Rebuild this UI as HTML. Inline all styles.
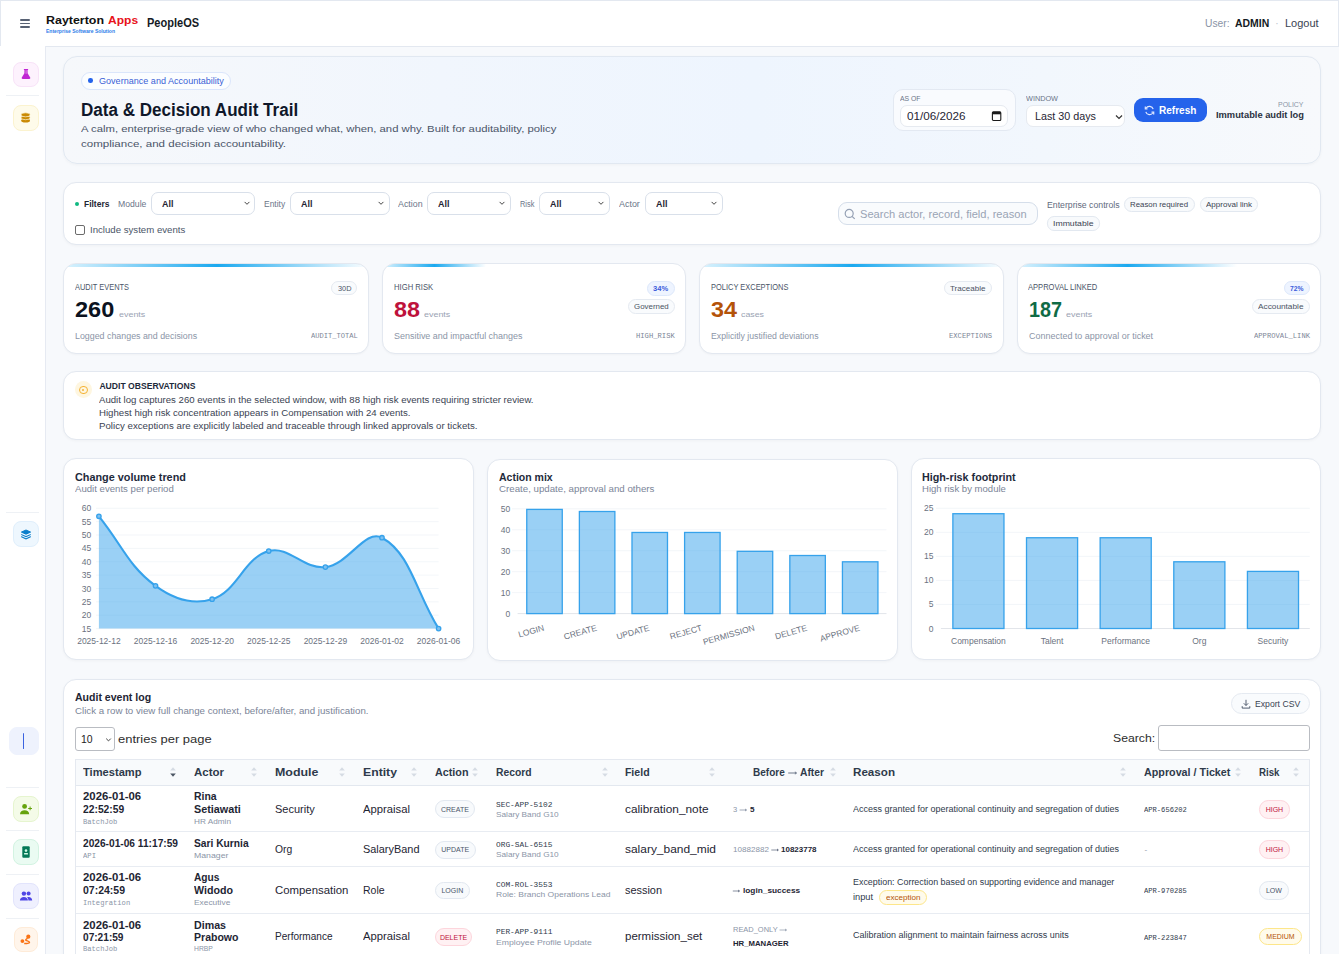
<!DOCTYPE html>
<html><head><meta charset="utf-8"><title>Data &amp; Decision Audit Trail</title>
<style>
html,body{margin:0;padding:0;}
body{width:1339px;height:954px;overflow:hidden;position:relative;background:#f8fafc;font-family:"Liberation Sans", sans-serif;}
.a{position:absolute;box-sizing:border-box;}
.t{white-space:pre;line-height:1;}

</style></head><body>
<div class="a" style="left:0.00px;top:0.00px;width:1339.00px;height:954.00px;background:#f7f9fc;"></div>
<div class="a" style="left:0.00px;top:0.00px;width:1339.00px;height:47.00px;background:#fff;border:1px solid #e3e8f0;"></div>
<div class="a" style="left:19.80px;top:19.10px;width:10.40px;height:1.60px;background:#586274;border-radius:1px;"></div>
<div class="a" style="left:19.80px;top:22.70px;width:10.40px;height:1.60px;background:#586274;border-radius:1px;"></div>
<div class="a" style="left:19.80px;top:26.20px;width:10.40px;height:1.60px;background:#586274;border-radius:1px;"></div>
<div class="a t" style="left:46.30px;top:14.02px;font-size:11.7px;font-weight:700;color:#111111;transform:scaleX(1.0632);transform-origin:0 0;">Rayterton</div>
<div class="a t" style="left:107.60px;top:14.02px;font-size:11.7px;font-weight:700;color:#e8131b;transform:scaleX(1.0302);transform-origin:0 0;">Apps</div>
<div class="a t" style="left:46.30px;top:30.02px;font-size:4.6px;font-weight:700;color:#2b7de9;transform:scaleX(1.0945);transform-origin:0 0;">Enterprise Software Solution</div>
<div class="a t" style="left:146.70px;top:18.02px;font-size:11.9px;font-weight:700;color:#161b26;transform:scaleX(0.9276);transform-origin:0 0;">PeopleOS</div>
<div class="a t" style="left:1205.00px;top:19.02px;font-size:10.0px;color:#8a94a6;transform:scaleX(1.0255);transform-origin:0 0;">User:</div>
<div class="a t" style="left:1235.00px;top:19.02px;font-size:10.0px;font-weight:700;color:#141a24;transform:scaleX(1.0435);transform-origin:0 0;">ADMIN</div>
<div class="a t" style="left:1275.33px;top:19.02px;font-size:10.0px;color:#b8c0cc;">·</div>
<div class="a t" style="left:1284.60px;top:19.02px;font-size:10.0px;color:#3a4352;transform:scaleX(1.0985);transform-origin:0 0;">Logout</div>
<div class="a" style="left:0.00px;top:46.00px;width:46.00px;height:908.00px;background:#fff;border-right:1px solid #e6eaf2;"></div>
<div class="a" style="left:13.10px;top:61.50px;width:25.70px;height:25.00px;background:#fdf2fd;border:1px solid #f8e3f8;border-radius:8px;"></div>
<div class="a" style="left:5.70px;top:95.00px;width:33.80px;height:1.00px;background:#eef1f5;"></div>
<div class="a" style="left:13.10px;top:105.00px;width:25.70px;height:25.70px;background:#fefbea;border:1px solid #fbf3cf;border-radius:8px;"></div>
<div class="a" style="left:5.70px;top:512.30px;width:33.80px;height:1.00px;background:#eef1f5;"></div>
<div class="a" style="left:13.10px;top:521.40px;width:25.70px;height:26.00px;background:#eef7fe;border:1px solid #e0effc;border-radius:8px;"></div>
<div class="a" style="left:8.80px;top:726.60px;width:30.70px;height:28.80px;background:#eef2fd;border:1px solid #eef2fd;border-radius:8px;"></div>
<div class="a" style="left:22.80px;top:733.00px;width:1.60px;height:16.00px;background:#3b63e0;border-radius:1px;"></div>
<div class="a" style="left:5.70px;top:786.70px;width:33.80px;height:1.00px;background:#eef1f5;"></div>
<div class="a" style="left:13.10px;top:795.80px;width:25.70px;height:26.20px;background:#f4fbe8;border:1px solid #e6f5cf;border-radius:8px;"></div>
<div class="a" style="left:5.70px;top:830.30px;width:33.80px;height:1.00px;background:#eef1f5;"></div>
<div class="a" style="left:13.10px;top:839.00px;width:25.70px;height:26.00px;background:#eafbf2;border:1px solid #d3f3e2;border-radius:8px;"></div>
<div class="a" style="left:5.70px;top:874.20px;width:33.80px;height:1.00px;background:#eef1f5;"></div>
<div class="a" style="left:13.10px;top:883.20px;width:25.70px;height:25.80px;background:#eff0fe;border:1px solid #e2e4fc;border-radius:8px;"></div>
<div class="a" style="left:5.70px;top:917.60px;width:33.80px;height:1.00px;background:#eef1f5;"></div>
<div class="a" style="left:14.00px;top:926.80px;width:23.80px;height:25.20px;background:#fff5eb;border:1px solid #feebd8;border-radius:8px;"></div>
<svg class="a" style="left:19px;top:67px;" width="13" height="14" viewBox="0 0 13 14"><path d="M4.9 2.1H9.1V3.1H8.6V6.3L11.2 10.6C11.6 11.3 11.1 11.9 10.3 11.9H3.7C2.9 11.9 2.4 11.3 2.8 10.6L5.4 6.3V3.1H4.9Z" fill="#c026d3"/><rect x="6.75" y="3.2" width="0.6" height="3.6" fill="#f6d6fb"/></svg>
<svg class="a" style="left:19px;top:111px;" width="13" height="14" viewBox="0 0 13 14"><ellipse cx="6.6" cy="9.6" rx="4.4" ry="2.0" fill="#ca8a04"/><ellipse cx="6.6" cy="6.7" rx="4.5" ry="2.0" fill="#ca8a04" stroke="#fdf6d8" stroke-width="0.7"/><ellipse cx="6.6" cy="3.8" rx="4.5" ry="2.0" fill="#ca8a04" stroke="#fdf6d8" stroke-width="0.7"/></svg>
<svg class="a" style="left:19px;top:527px;" width="14" height="14" viewBox="0 0 14 14"><path d="M7 3.0L11.6 5.1L7 7.2L2.4 5.1Z" fill="#0a7fcb" stroke="#0a7fcb" stroke-width="1" stroke-linejoin="round"/><path d="M2.2 6.9L7 9.1L11.8 6.9V8.1L7 10.3L2.2 8.1Z" fill="#0a7fcb"/><path d="M2.2 9.1L7 11.3L11.8 9.1V10.3L7 12.5L2.2 10.3Z" fill="#0a7fcb"/></svg>
<svg class="a" style="left:19px;top:802px;" width="14" height="14" viewBox="0 0 14 14"><circle cx="5.6" cy="4.4" r="2.4" fill="#65a30d"/><path d="M1 12.2c0-2.5 2-3.9 4.6-3.9s4.6 1.4 4.6 3.9z" fill="#65a30d"/><path d="M10.6 4.5h1v1.4H13v1h-1.4v1.4h-1V6.9H9.2v-1h1.4z" fill="#65a30d"/></svg>
<svg class="a" style="left:19px;top:845px;" width="14" height="14" viewBox="0 0 14 14"><rect x="3.3" y="1.3" width="7.4" height="11.4" rx="1" fill="#047857"/><circle cx="7" cy="5.6" r="1.3" fill="#d1fae5"/><rect x="5" y="8" width="4" height="1.6" rx=".6" fill="#d1fae5"/></svg>
<svg class="a" style="left:19px;top:889px;" width="14" height="14" viewBox="0 0 14 14"><circle cx="4.9" cy="4.6" r="2.2" fill="#4f46e5"/><circle cx="9.6" cy="4.6" r="2" fill="#4f46e5"/><path d="M0.9 11.6c0-2.2 1.7-3.6 4-3.6s4 1.4 4 3.6z" fill="#4f46e5"/><path d="M9.4 11.6c0-1.4-.5-2.6-1.4-3.3.5-.2 1-.3 1.6-.3 2.1 0 3.6 1.3 3.6 3.6z" fill="#4f46e5"/></svg>
<svg class="a" style="left:19px;top:932px;" width="14" height="14" viewBox="0 0 14 14"><circle cx="9.3" cy="4.7" r="2.1" fill="#f97316"/><circle cx="3.4" cy="9.1" r="1.9" fill="#f97316"/><path d="M8.6 6.2C7.4 6.9 6.3 7.3 6.7 8.1C7.1 8.9 10.5 8.9 10.5 10.2C10.5 11.4 8.8 11.5 5.2 11.5" fill="none" stroke="#f97316" stroke-width="1.4"/></svg>
<div class="a" style="left:63.00px;top:56.30px;width:1258.00px;height:107.90px;background:linear-gradient(90deg,#f6f8fb 0%,#f1f6fd 30%,#eef5fe 55%,#f2f7fd 78%,#f7f9fc 100%);border:1px solid #e1e8f1;border-radius:14px;box-shadow:0 1px 3px rgba(15,23,42,0.035);"></div>
<div class="a" style="left:80.70px;top:71.70px;width:150.80px;height:17.90px;background:#fbfdff;border:1px solid #dbe6fb;border-radius:9px;"></div>
<div class="a" style="left:88.40px;top:78.40px;width:4.60px;height:4.60px;background:#2563eb;border-radius:50%;"></div>
<div class="a t" style="left:98.60px;top:77.02px;font-size:8.5px;color:#3a5fd6;transform:scaleX(1.0658);transform-origin:0 0;">Governance and Accountability</div>
<div class="a t" style="left:81.20px;top:102.02px;font-size:17.5px;font-weight:700;color:#0f172a;transform:scaleX(0.9738);transform-origin:0 0;">Data &amp; Decision Audit Trail</div>
<div class="a t" style="left:81.00px;top:124.02px;font-size:9.8px;color:#4a5568;transform:scaleX(1.1542);transform-origin:0 0;">A calm, enterprise-grade view of who changed what, when, and why. Built for auditability, policy</div>
<div class="a t" style="left:81.00px;top:139.02px;font-size:9.8px;color:#4a5568;transform:scaleX(1.1776);transform-origin:0 0;">compliance, and decision accountability.</div>
<div class="a" style="left:892.90px;top:88.60px;width:123.30px;height:42.80px;background:#f9fbfe;border:1px solid #e3e9f2;border-radius:10px;"></div>
<div class="a t" style="left:900.20px;top:95.02px;font-size:7.0px;color:#6b7588;transform:scaleX(0.9760);transform-origin:0 0;">AS OF</div>
<div class="a" style="left:900.30px;top:105.30px;width:108.20px;height:21.30px;background:#fff;border:1px solid #e6eaf0;border-radius:7px;"></div>
<div class="a t" style="left:907.00px;top:111.02px;font-size:10.8px;color:#1f2533;transform:scaleX(1.0826);transform-origin:0 0;">01/06/2026</div>
<svg class="a" style="left:991px;top:110px;" width="11" height="12" viewBox="0 0 11 12"><rect x="1.4" y="1.9" width="8.4" height="8.6" rx="1" fill="none" stroke="#1a1a1a" stroke-width="1.1"/><rect x="1.4" y="1.9" width="8.4" height="2.4" fill="#1a1a1a"/></svg>
<div class="a t" style="left:1025.50px;top:95.02px;font-size:7.0px;color:#6b7588;transform:scaleX(1.0419);transform-origin:0 0;">WINDOW</div>
<div class="a" style="left:1026.00px;top:105.30px;width:98.70px;height:21.90px;background:#fff;border:1px solid #e6eaf0;border-radius:7px;"></div>
<div class="a t" style="left:1035.00px;top:111.02px;font-size:10.8px;color:#1f2533;transform:scaleX(0.9964);transform-origin:0 0;">Last 30 days</div>
<svg class="a" style="left:1114px;top:113px;" width="10" height="8" viewBox="0 0 10 8"><path d="M2 2.5l3 3 3-3" fill="none" stroke="#333" stroke-width="1.2"/></svg>
<div class="a" style="left:1133.70px;top:98.10px;width:73.50px;height:24.20px;background:#2563eb;border-radius:9px;"></div>
<svg class="a" style="left:1143px;top:104px;" width="13" height="13" viewBox="0 0 13 13"><path d="M10.2 5.2A4 4 0 0 0 3 4.2M2.8 7.8A4 4 0 0 0 10 8.8" fill="none" stroke="#dfe8ff" stroke-width="1.2"/><path d="M2.3 2.6v2.2h2.2M10.7 10.4V8.2H8.5" fill="none" stroke="#dfe8ff" stroke-width="1.2"/></svg>
<div class="a t" style="left:1159.00px;top:106.02px;font-size:10.0px;font-weight:700;color:#ffffff;transform:scaleX(1.0044);transform-origin:0 0;">Refresh</div>
<div class="a t" style="left:1278.30px;top:102.02px;font-size:6.8px;color:#8b95a6;transform:scaleX(1.0228);transform-origin:0 0;">POLICY</div>
<div class="a t" style="left:1215.80px;top:111.02px;font-size:9.0px;font-weight:700;color:#2a3140;transform:scaleX(1.0353);transform-origin:0 0;">Immutable audit log</div>
<div class="a" style="left:63.00px;top:182.00px;width:1258.00px;height:62.80px;background:#fff;border:1px solid #e3e8f0;border-radius:13px;box-shadow:0 1px 3px rgba(15,23,42,0.035);"></div>
<div class="a" style="left:75.10px;top:201.50px;width:4.40px;height:4.40px;background:#10b981;border-radius:50%;"></div>
<div class="a t" style="left:83.60px;top:199.02px;font-size:9.5px;font-weight:700;color:#1e2533;transform:scaleX(0.8909);transform-origin:0 0;">Filters</div>
<div class="a t" style="left:117.90px;top:200.02px;font-size:8.5px;color:#6b7588;transform:scaleX(1.0187);transform-origin:0 0;">Module</div>
<div class="a" style="left:151.40px;top:192.30px;width:104.10px;height:22.60px;background:#fff;border:1px solid #d9e0ea;border-radius:7px;"></div>
<div class="a t" style="left:162.40px;top:200.02px;font-size:9.2px;font-weight:700;color:#1f2533;transform:scaleX(0.9710);transform-origin:0 0;">All</div>
<svg class="a" style="left:241.5px;top:199px;" width="10.0" height="8" viewBox="0 0 10.0 8"><path d="M2.6 2.9l2.4 2.4 2.4-2.4" fill="none" stroke="#444" stroke-width="1"/></svg>
<div class="a t" style="left:264.40px;top:200.02px;font-size:8.5px;color:#6b7588;transform:scaleX(0.9926);transform-origin:0 0;">Entity</div>
<div class="a" style="left:290.30px;top:192.30px;width:99.30px;height:22.60px;background:#fff;border:1px solid #d9e0ea;border-radius:7px;"></div>
<div class="a t" style="left:301.30px;top:200.02px;font-size:9.2px;font-weight:700;color:#1f2533;transform:scaleX(0.9710);transform-origin:0 0;">All</div>
<svg class="a" style="left:375.6px;top:199px;" width="10.0" height="8" viewBox="0 0 10.0 8"><path d="M2.6 2.9l2.4 2.4 2.4-2.4" fill="none" stroke="#444" stroke-width="1"/></svg>
<div class="a t" style="left:398.40px;top:200.02px;font-size:8.5px;color:#6b7588;transform:scaleX(1.0413);transform-origin:0 0;">Action</div>
<div class="a" style="left:427.30px;top:192.30px;width:83.80px;height:22.60px;background:#fff;border:1px solid #d9e0ea;border-radius:7px;"></div>
<div class="a t" style="left:438.30px;top:200.02px;font-size:9.2px;font-weight:700;color:#1f2533;transform:scaleX(0.9710);transform-origin:0 0;">All</div>
<svg class="a" style="left:497.1px;top:199px;" width="10.0" height="8" viewBox="0 0 10.0 8"><path d="M2.6 2.9l2.4 2.4 2.4-2.4" fill="none" stroke="#444" stroke-width="1"/></svg>
<div class="a t" style="left:520.30px;top:200.02px;font-size:8.5px;color:#6b7588;transform:scaleX(0.8713);transform-origin:0 0;">Risk</div>
<div class="a" style="left:539.00px;top:192.30px;width:70.90px;height:22.60px;background:#fff;border:1px solid #d9e0ea;border-radius:7px;"></div>
<div class="a t" style="left:550.00px;top:200.02px;font-size:9.2px;font-weight:700;color:#1f2533;transform:scaleX(0.9710);transform-origin:0 0;">All</div>
<svg class="a" style="left:595.9px;top:199px;" width="10.0" height="8" viewBox="0 0 10.0 8"><path d="M2.6 2.9l2.4 2.4 2.4-2.4" fill="none" stroke="#444" stroke-width="1"/></svg>
<div class="a t" style="left:619.30px;top:200.02px;font-size:8.5px;color:#6b7588;transform:scaleX(1.0484);transform-origin:0 0;">Actor</div>
<div class="a" style="left:645.20px;top:192.30px;width:77.50px;height:22.60px;background:#fff;border:1px solid #d9e0ea;border-radius:7px;"></div>
<div class="a t" style="left:656.20px;top:200.02px;font-size:9.2px;font-weight:700;color:#1f2533;transform:scaleX(0.9710);transform-origin:0 0;">All</div>
<svg class="a" style="left:708.7px;top:199px;" width="10.0" height="8" viewBox="0 0 10.0 8"><path d="M2.6 2.9l2.4 2.4 2.4-2.4" fill="none" stroke="#444" stroke-width="1"/></svg>
<div class="a" style="left:74.50px;top:225.00px;width:10.10px;height:9.90px;background:#fff;border:1px solid #6b6b6b;border-radius:2px;"></div>
<div class="a t" style="left:89.70px;top:226.02px;font-size:9.0px;color:#4a5568;transform:scaleX(1.0703);transform-origin:0 0;">Include system events</div>
<div class="a" style="left:837.50px;top:201.60px;width:200.30px;height:23.90px;background:#f9fbfd;border:1px solid #d5deea;border-radius:9px;"></div>
<svg class="a" style="left:843px;top:207px;" width="14" height="14" viewBox="0 0 14 14"><circle cx="6.2" cy="6.4" r="4" fill="none" stroke="#94a0b4" stroke-width="1.2"/><path d="M9.1 9.3l2.6 2.6" stroke="#94a0b4" stroke-width="1.2"/></svg>
<div class="a t" style="left:860.40px;top:209.02px;font-size:11.0px;color:#9aa4b5;transform:scaleX(1.0092);transform-origin:0 0;">Search actor, record, field, reason</div>
<div class="a t" style="left:1046.90px;top:201.02px;font-size:8.5px;color:#5f6a7d;transform:scaleX(1.0245);transform-origin:0 0;">Enterprise controls</div>
<div class="a" style="left:1124.00px;top:196.90px;width:70.90px;height:14.80px;background:#f8fafc;border:1px solid #e2e8f0;border-radius:7.4px;"></div>
<div class="a t" style="left:1130.45px;top:201.02px;font-size:7.6px;color:#3a4352;transform:scaleX(1.0330);transform-origin:0 0;">Reason required</div>
<div class="a" style="left:1199.60px;top:196.90px;width:58.10px;height:14.80px;background:#f8fafc;border:1px solid #e2e8f0;border-radius:7.4px;"></div>
<div class="a t" style="left:1205.65px;top:201.02px;font-size:7.6px;color:#3a4352;transform:scaleX(1.0581);transform-origin:0 0;">Approval link</div>
<div class="a" style="left:1046.50px;top:216.40px;width:53.10px;height:14.30px;background:#f8fafc;border:1px solid #e2e8f0;border-radius:7.1px;"></div>
<div class="a t" style="left:1052.80px;top:220.02px;font-size:7.6px;color:#3a4352;transform:scaleX(1.1424);transform-origin:0 0;">Immutable</div>
<div class="a" style="left:63.1px;top:263.2px;width:305.80px;height:90.60px;background:#fff;border:1px solid #e3e8f0;border-radius:13px;overflow:hidden;box-shadow:0 1px 2px rgba(15,23,42,0.03);"><div style="position:absolute;left:0;top:0;width:305.8px;height:3.2px;background:linear-gradient(90deg,rgba(56,189,248,0.18),#1ba9ef 50%,rgba(56,189,248,0.0));"></div></div>
<div class="a t" style="left:75.00px;top:283.02px;font-size:8.4px;color:#4a5568;transform:scaleX(0.8891);transform-origin:0 0;">AUDIT EVENTS</div>
<div class="a t" style="left:75.20px;top:299.02px;font-size:22.2px;font-weight:700;color:#0b1220;transform:scaleX(1.0589);transform-origin:0 0;">260</div>
<div class="a t" style="left:118.90px;top:311.02px;font-size:7.8px;color:#9aa3b3;transform:scaleX(1.1449);transform-origin:0 0;">events</div>
<div class="a t" style="left:75.20px;top:332.02px;font-size:8.3px;color:#8b95a7;transform:scaleX(1.0673);transform-origin:0 0;">Logged changes and decisions</div>
<div class="a t" style="left:310.70px;top:333.02px;font-size:7.4px;font-family:'Liberation Mono', monospace;color:#7d8697;transform:scaleX(0.9593);transform-origin:0 0;">AUDIT_TOTAL</div>
<div class="a" style="left:331.40px;top:281.10px;width:26.00px;height:14.40px;background:#f9fbfd;border:1px solid #e5eaf1;border-radius:8px;"></div>
<div class="a t" style="left:337.65px;top:285.02px;font-size:7.6px;color:#4a5568;transform:scaleX(0.9691);transform-origin:0 0;">30D</div>
<div class="a" style="left:381.8px;top:263.2px;width:304.50px;height:90.60px;background:#fff;border:1px solid #e3e8f0;border-radius:13px;overflow:hidden;box-shadow:0 1px 2px rgba(15,23,42,0.03);"><div style="position:absolute;left:0;top:0;width:103.5px;height:3.2px;background:linear-gradient(90deg,rgba(56,189,248,0.18),#1ba9ef 50%,rgba(56,189,248,0.0));"></div></div>
<div class="a t" style="left:393.70px;top:283.02px;font-size:8.4px;color:#4a5568;transform:scaleX(0.9156);transform-origin:0 0;">HIGH RISK</div>
<div class="a t" style="left:393.90px;top:299.02px;font-size:22.2px;font-weight:700;color:#be123c;transform:scaleX(1.0535);transform-origin:0 0;">88</div>
<div class="a t" style="left:424.40px;top:311.02px;font-size:7.8px;color:#9aa3b3;transform:scaleX(1.1449);transform-origin:0 0;">events</div>
<div class="a t" style="left:393.90px;top:332.02px;font-size:8.3px;color:#8b95a7;transform:scaleX(1.0799);transform-origin:0 0;">Sensitive and impactful changes</div>
<div class="a t" style="left:636.10px;top:333.02px;font-size:7.4px;font-family:'Liberation Mono', monospace;color:#7d8697;transform:scaleX(0.9720);transform-origin:0 0;">HIGH_RISK</div>
<div class="a" style="left:647.20px;top:280.50px;width:27.60px;height:15.10px;background:#eef4ff;border:1px solid #dde8fb;border-radius:8px;"></div>
<div class="a t" style="left:653.45px;top:285.02px;font-size:7.6px;font-weight:700;color:#3b5bdb;transform:scaleX(0.9935);transform-origin:0 0;">34%</div>
<div class="a" style="left:627.60px;top:298.50px;width:47.20px;height:15.10px;background:#f9fbfd;border:1px solid #e5eaf1;border-radius:8px;"></div>
<div class="a t" style="left:633.85px;top:303.02px;font-size:7.6px;color:#4a5363;transform:scaleX(1.0405);transform-origin:0 0;">Governed</div>
<div class="a" style="left:698.6px;top:263.2px;width:305.00px;height:90.60px;background:#fff;border:1px solid #e3e8f0;border-radius:13px;overflow:hidden;box-shadow:0 1px 2px rgba(15,23,42,0.03);"><div style="position:absolute;left:0;top:0;width:305.0px;height:3.2px;background:linear-gradient(90deg,rgba(56,189,248,0.18),#1ba9ef 50%,rgba(56,189,248,0.0));"></div></div>
<div class="a t" style="left:710.50px;top:283.02px;font-size:8.4px;color:#4a5568;transform:scaleX(0.8905);transform-origin:0 0;">POLICY EXCEPTIONS</div>
<div class="a t" style="left:710.70px;top:299.02px;font-size:22.2px;font-weight:700;color:#b45309;transform:scaleX(1.0535);transform-origin:0 0;">34</div>
<div class="a t" style="left:741.20px;top:311.02px;font-size:7.8px;color:#9aa3b3;transform:scaleX(1.1292);transform-origin:0 0;">cases</div>
<div class="a t" style="left:710.70px;top:332.02px;font-size:8.3px;color:#8b95a7;transform:scaleX(1.0501);transform-origin:0 0;">Explicitly justified deviations</div>
<div class="a t" style="left:949.20px;top:333.02px;font-size:7.4px;font-family:'Liberation Mono', monospace;color:#7d8697;transform:scaleX(0.9695);transform-origin:0 0;">EXCEPTIONS</div>
<div class="a" style="left:944.10px;top:281.10px;width:48.00px;height:14.40px;background:#f9fbfd;border:1px solid #e5eaf1;border-radius:8px;"></div>
<div class="a t" style="left:950.35px;top:285.02px;font-size:7.6px;color:#4a5363;transform:scaleX(1.0602);transform-origin:0 0;">Traceable</div>
<div class="a" style="left:1016.5px;top:263.2px;width:304.50px;height:90.60px;background:#fff;border:1px solid #e3e8f0;border-radius:13px;overflow:hidden;box-shadow:0 1px 2px rgba(15,23,42,0.03);"><div style="position:absolute;left:0;top:0;width:219.2px;height:3.2px;background:linear-gradient(90deg,rgba(56,189,248,0.18),#1ba9ef 50%,rgba(56,189,248,0.0));"></div></div>
<div class="a t" style="left:1028.40px;top:283.02px;font-size:8.4px;color:#4a5568;transform:scaleX(0.9026);transform-origin:0 0;">APPROVAL LINKED</div>
<div class="a t" style="left:1028.60px;top:299.02px;font-size:22.2px;font-weight:700;color:#0f6b45;transform:scaleX(0.8914);transform-origin:0 0;">187</div>
<div class="a t" style="left:1066.10px;top:311.02px;font-size:7.8px;color:#9aa3b3;transform:scaleX(1.1449);transform-origin:0 0;">events</div>
<div class="a t" style="left:1028.60px;top:332.02px;font-size:8.3px;color:#8b95a7;transform:scaleX(1.0806);transform-origin:0 0;">Connected to approval or ticket</div>
<div class="a t" style="left:1253.60px;top:333.02px;font-size:7.4px;font-family:'Liberation Mono', monospace;color:#7d8697;transform:scaleX(0.9713);transform-origin:0 0;">APPROVAL_LINK</div>
<div class="a" style="left:1283.50px;top:281.10px;width:26.00px;height:14.40px;background:#eef4ff;border:1px solid #dde8fb;border-radius:8px;"></div>
<div class="a t" style="left:1289.75px;top:285.02px;font-size:7.6px;font-weight:700;color:#3b5bdb;transform:scaleX(0.8882);transform-origin:0 0;">72%</div>
<div class="a" style="left:1251.50px;top:298.50px;width:58.00px;height:15.10px;background:#f9fbfd;border:1px solid #e5eaf1;border-radius:8px;"></div>
<div class="a t" style="left:1257.75px;top:303.02px;font-size:7.6px;color:#4a5363;transform:scaleX(1.0886);transform-origin:0 0;">Accountable</div>
<div class="a" style="left:63.10px;top:371.20px;width:1257.90px;height:68.60px;background:#fff;border:1px solid #e3e8f0;border-radius:13px;box-shadow:0 1px 3px rgba(15,23,42,0.035);"></div>
<div class="a" style="left:74.60px;top:381.30px;width:17.40px;height:16.90px;background:#fef6e0;border-radius:50%;"></div>
<div class="a" style="left:78.90px;top:385.60px;width:8.80px;height:8.80px;border:1.2px solid #f5b335;border-radius:50%;"></div>
<div class="a" style="left:82.20px;top:388.90px;width:2.20px;height:2.20px;background:#f5b335;border-radius:50%;"></div>
<div class="a t" style="left:99.40px;top:382.02px;font-size:8.6px;font-weight:700;color:#1e2a3b;">AUDIT OBSERVATIONS</div>
<div class="a t" style="left:99.40px;top:396.02px;font-size:8.9px;color:#3a4352;transform:scaleX(1.0820);transform-origin:0 0;">Audit log captures 260 events in the selected window, with 88 high risk events requiring stricter review.</div>
<div class="a t" style="left:99.40px;top:409.02px;font-size:8.9px;color:#3a4352;transform:scaleX(1.0868);transform-origin:0 0;">Highest high risk concentration appears in Compensation with 24 events.</div>
<div class="a t" style="left:99.40px;top:422.02px;font-size:8.9px;color:#3a4352;transform:scaleX(1.0914);transform-origin:0 0;">Policy exceptions are explicitly labeled and traceable through linked approvals or tickets.</div>
<div class="a" style="left:63.10px;top:458.20px;width:411.30px;height:202.30px;background:#fff;border:1px solid #e3e8f0;border-radius:13px;box-shadow:0 1px 3px rgba(15,23,42,0.035);"></div>
<div class="a t" style="left:74.90px;top:473.02px;font-size:10.2px;font-weight:700;color:#1e2a3b;transform:scaleX(1.0648);transform-origin:0 0;">Change volume trend</div>
<div class="a t" style="left:74.90px;top:485.02px;font-size:8.4px;color:#7b8598;transform:scaleX(1.1471);transform-origin:0 0;">Audit events per period</div>
<div class="a" style="left:487.00px;top:458.70px;width:410.80px;height:202.30px;background:#fff;border:1px solid #e3e8f0;border-radius:13px;box-shadow:0 1px 3px rgba(15,23,42,0.035);"></div>
<div class="a t" style="left:498.60px;top:473.02px;font-size:10.2px;font-weight:700;color:#1e2a3b;transform:scaleX(1.0312);transform-origin:0 0;">Action mix</div>
<div class="a t" style="left:498.60px;top:485.02px;font-size:8.4px;color:#7b8598;transform:scaleX(1.1589);transform-origin:0 0;">Create, update, approval and others</div>
<div class="a" style="left:910.80px;top:458.20px;width:410.50px;height:202.30px;background:#fff;border:1px solid #e3e8f0;border-radius:13px;box-shadow:0 1px 3px rgba(15,23,42,0.035);"></div>
<div class="a t" style="left:922.00px;top:473.02px;font-size:10.2px;font-weight:700;color:#1e2a3b;transform:scaleX(1.0546);transform-origin:0 0;">High-risk footprint</div>
<div class="a t" style="left:922.00px;top:485.02px;font-size:8.4px;color:#7b8598;transform:scaleX(1.1408);transform-origin:0 0;">High risk by module</div>
<svg class="a" style="left:0;top:0;" width="1339" height="954" viewBox="0 0 1339 954" font-family="'Liberation Sans', sans-serif"><line x1="96" y1="508.30" x2="438.6" y2="508.30" stroke="#eef2f7" stroke-width="0.7"/><text x="91.3" y="511.30" text-anchor="end" font-size="8.5" fill="#6b7280">60</text><line x1="96" y1="521.67" x2="438.6" y2="521.67" stroke="#eef2f7" stroke-width="0.7"/><text x="91.3" y="524.67" text-anchor="end" font-size="8.5" fill="#6b7280">55</text><line x1="96" y1="535.03" x2="438.6" y2="535.03" stroke="#eef2f7" stroke-width="0.7"/><text x="91.3" y="538.03" text-anchor="end" font-size="8.5" fill="#6b7280">50</text><line x1="96" y1="548.40" x2="438.6" y2="548.40" stroke="#eef2f7" stroke-width="0.7"/><text x="91.3" y="551.40" text-anchor="end" font-size="8.5" fill="#6b7280">45</text><line x1="96" y1="561.77" x2="438.6" y2="561.77" stroke="#eef2f7" stroke-width="0.7"/><text x="91.3" y="564.77" text-anchor="end" font-size="8.5" fill="#6b7280">40</text><line x1="96" y1="575.13" x2="438.6" y2="575.13" stroke="#eef2f7" stroke-width="0.7"/><text x="91.3" y="578.13" text-anchor="end" font-size="8.5" fill="#6b7280">35</text><line x1="96" y1="588.50" x2="438.6" y2="588.50" stroke="#eef2f7" stroke-width="0.7"/><text x="91.3" y="591.50" text-anchor="end" font-size="8.5" fill="#6b7280">30</text><line x1="96" y1="601.87" x2="438.6" y2="601.87" stroke="#eef2f7" stroke-width="0.7"/><text x="91.3" y="604.87" text-anchor="end" font-size="8.5" fill="#6b7280">25</text><line x1="96" y1="615.23" x2="438.6" y2="615.23" stroke="#eef2f7" stroke-width="0.7"/><text x="91.3" y="618.23" text-anchor="end" font-size="8.5" fill="#6b7280">20</text><line x1="96" y1="628.60" x2="438.6" y2="628.60" stroke="#eef2f7" stroke-width="0.7"/><text x="91.3" y="631.60" text-anchor="end" font-size="8.5" fill="#6b7280">15</text><path d="M98.90,516.32 C121.55,544.12 128.05,565.72 155.52,585.83 C173.34,598.87 192.24,605.30 212.13,599.19 C237.54,591.40 243.47,558.23 268.75,551.07 C288.77,545.40 303.63,569.68 325.37,567.11 C348.93,564.33 365.07,528.52 381.98,537.71 C410.37,553.12 415.95,592.24 438.60,628.60 L438.60,628.60 L98.90,628.60 Z" fill="rgba(54,162,235,0.5)"/><path d="M98.90,516.32 C121.55,544.12 128.05,565.72 155.52,585.83 C173.34,598.87 192.24,605.30 212.13,599.19 C237.54,591.40 243.47,558.23 268.75,551.07 C288.77,545.40 303.63,569.68 325.37,567.11 C348.93,564.33 365.07,528.52 381.98,537.71 C410.37,553.12 415.95,592.24 438.60,628.60" fill="none" stroke="#36a2eb" stroke-width="2.1"/><circle cx="98.90" cy="516.32" r="2.2" fill="#7ec0f0" stroke="#36a2eb" stroke-width="1.3"/><circle cx="155.52" cy="585.83" r="2.2" fill="#7ec0f0" stroke="#36a2eb" stroke-width="1.3"/><circle cx="212.13" cy="599.19" r="2.2" fill="#7ec0f0" stroke="#36a2eb" stroke-width="1.3"/><circle cx="268.75" cy="551.07" r="2.2" fill="#7ec0f0" stroke="#36a2eb" stroke-width="1.3"/><circle cx="325.37" cy="567.11" r="2.2" fill="#7ec0f0" stroke="#36a2eb" stroke-width="1.3"/><circle cx="381.98" cy="537.71" r="2.2" fill="#7ec0f0" stroke="#36a2eb" stroke-width="1.3"/><circle cx="438.60" cy="628.60" r="2.2" fill="#7ec0f0" stroke="#36a2eb" stroke-width="1.3"/><text x="98.90" y="644.3" text-anchor="middle" font-size="8.5" fill="#6b7280">2025-12-12</text><text x="155.52" y="644.3" text-anchor="middle" font-size="8.5" fill="#6b7280">2025-12-16</text><text x="212.13" y="644.3" text-anchor="middle" font-size="8.5" fill="#6b7280">2025-12-20</text><text x="268.75" y="644.3" text-anchor="middle" font-size="8.5" fill="#6b7280">2025-12-25</text><text x="325.37" y="644.3" text-anchor="middle" font-size="8.5" fill="#6b7280">2025-12-29</text><text x="381.98" y="644.3" text-anchor="middle" font-size="8.5" fill="#6b7280">2026-01-02</text><text x="438.60" y="644.3" text-anchor="middle" font-size="8.5" fill="#6b7280">2026-01-06</text><line x1="517.6" y1="613.60" x2="886.5" y2="613.60" stroke="#e2e5ea" stroke-width="1"/><text x="510.3" y="616.60" text-anchor="end" font-size="8.5" fill="#6b7280">0</text><line x1="512" y1="592.64" x2="886.5" y2="592.64" stroke="#eef2f7" stroke-width="0.7"/><text x="510.3" y="595.64" text-anchor="end" font-size="8.5" fill="#6b7280">10</text><line x1="512" y1="571.68" x2="886.5" y2="571.68" stroke="#eef2f7" stroke-width="0.7"/><text x="510.3" y="574.68" text-anchor="end" font-size="8.5" fill="#6b7280">20</text><line x1="512" y1="550.72" x2="886.5" y2="550.72" stroke="#eef2f7" stroke-width="0.7"/><text x="510.3" y="553.72" text-anchor="end" font-size="8.5" fill="#6b7280">30</text><line x1="512" y1="529.76" x2="886.5" y2="529.76" stroke="#eef2f7" stroke-width="0.7"/><text x="510.3" y="532.76" text-anchor="end" font-size="8.5" fill="#6b7280">40</text><line x1="512" y1="508.80" x2="886.5" y2="508.80" stroke="#eef2f7" stroke-width="0.7"/><text x="510.3" y="511.80" text-anchor="end" font-size="8.5" fill="#6b7280">50</text><rect x="526.76" y="509.40" width="35.50" height="104.20" fill="rgba(54,162,235,0.5)" stroke="#36a2eb" stroke-width="1.3"/><text x="543.51" y="630.50" text-anchor="end" font-size="8.5" fill="#6b7280" transform="rotate(-16 543.51 626)">LOGIN</text><rect x="579.37" y="511.50" width="35.50" height="102.10" fill="rgba(54,162,235,0.5)" stroke="#36a2eb" stroke-width="1.3"/><text x="596.12" y="630.50" text-anchor="end" font-size="8.5" fill="#6b7280" transform="rotate(-16 596.12 626)">CREATE</text><rect x="631.99" y="532.46" width="35.50" height="81.14" fill="rgba(54,162,235,0.5)" stroke="#36a2eb" stroke-width="1.3"/><text x="648.74" y="630.50" text-anchor="end" font-size="8.5" fill="#6b7280" transform="rotate(-16 648.74 626)">UPDATE</text><rect x="684.60" y="532.46" width="35.50" height="81.14" fill="rgba(54,162,235,0.5)" stroke="#36a2eb" stroke-width="1.3"/><text x="701.35" y="630.50" text-anchor="end" font-size="8.5" fill="#6b7280" transform="rotate(-16 701.35 626)">REJECT</text><rect x="737.21" y="551.32" width="35.50" height="62.28" fill="rgba(54,162,235,0.5)" stroke="#36a2eb" stroke-width="1.3"/><text x="753.96" y="630.50" text-anchor="end" font-size="8.5" fill="#6b7280" transform="rotate(-16 753.96 626)">PERMISSION</text><rect x="789.83" y="555.51" width="35.50" height="58.09" fill="rgba(54,162,235,0.5)" stroke="#36a2eb" stroke-width="1.3"/><text x="806.58" y="630.50" text-anchor="end" font-size="8.5" fill="#6b7280" transform="rotate(-16 806.58 626)">DELETE</text><rect x="842.44" y="561.80" width="35.50" height="51.80" fill="rgba(54,162,235,0.5)" stroke="#36a2eb" stroke-width="1.3"/><text x="859.19" y="630.50" text-anchor="end" font-size="8.5" fill="#6b7280" transform="rotate(-16 859.19 626)">APPROVE</text><line x1="940.9" y1="628.50" x2="1309.8" y2="628.50" stroke="#e2e5ea" stroke-width="1"/><text x="933.5" y="631.50" text-anchor="end" font-size="8.5" fill="#6b7280">0</text><line x1="936" y1="604.46" x2="1309.8" y2="604.46" stroke="#eef2f7" stroke-width="0.7"/><text x="933.5" y="607.46" text-anchor="end" font-size="8.5" fill="#6b7280">5</text><line x1="936" y1="580.42" x2="1309.8" y2="580.42" stroke="#eef2f7" stroke-width="0.7"/><text x="933.5" y="583.42" text-anchor="end" font-size="8.5" fill="#6b7280">10</text><line x1="936" y1="556.38" x2="1309.8" y2="556.38" stroke="#eef2f7" stroke-width="0.7"/><text x="933.5" y="559.38" text-anchor="end" font-size="8.5" fill="#6b7280">15</text><line x1="936" y1="532.34" x2="1309.8" y2="532.34" stroke="#eef2f7" stroke-width="0.7"/><text x="933.5" y="535.34" text-anchor="end" font-size="8.5" fill="#6b7280">20</text><line x1="936" y1="508.30" x2="1309.8" y2="508.30" stroke="#eef2f7" stroke-width="0.7"/><text x="933.5" y="511.30" text-anchor="end" font-size="8.5" fill="#6b7280">25</text><rect x="952.87" y="513.71" width="51.10" height="114.79" fill="rgba(54,162,235,0.5)" stroke="#36a2eb" stroke-width="1.3"/><text x="978.42" y="644.3" text-anchor="middle" font-size="8.5" fill="#6b7280">Compensation</text><rect x="1026.51" y="537.75" width="51.10" height="90.75" fill="rgba(54,162,235,0.5)" stroke="#36a2eb" stroke-width="1.3"/><text x="1052.06" y="644.3" text-anchor="middle" font-size="8.5" fill="#6b7280">Talent</text><rect x="1100.15" y="537.75" width="51.10" height="90.75" fill="rgba(54,162,235,0.5)" stroke="#36a2eb" stroke-width="1.3"/><text x="1125.70" y="644.3" text-anchor="middle" font-size="8.5" fill="#6b7280">Performance</text><rect x="1173.79" y="561.79" width="51.10" height="66.71" fill="rgba(54,162,235,0.5)" stroke="#36a2eb" stroke-width="1.3"/><text x="1199.34" y="644.3" text-anchor="middle" font-size="8.5" fill="#6b7280">Org</text><rect x="1247.43" y="571.40" width="51.10" height="57.10" fill="rgba(54,162,235,0.5)" stroke="#36a2eb" stroke-width="1.3"/><text x="1272.98" y="644.3" text-anchor="middle" font-size="8.5" fill="#6b7280">Security</text></svg>
<div class="a" style="left:63.40px;top:679.40px;width:1257.60px;height:320.60px;background:#fff;border:1px solid #e3e8f0;border-radius:13px;box-shadow:0 1px 3px rgba(15,23,42,0.035);"></div>
<div class="a t" style="left:75.20px;top:693.02px;font-size:10.0px;font-weight:700;color:#1e2533;transform:scaleX(1.0537);transform-origin:0 0;">Audit event log</div>
<div class="a t" style="left:75.20px;top:707.02px;font-size:8.6px;color:#7b8598;transform:scaleX(1.1295);transform-origin:0 0;">Click a row to view full change context, before/after, and justification.</div>
<div class="a" style="left:1231.40px;top:692.70px;width:78.50px;height:21.80px;background:#f9fbfd;border:1px solid #e5eaf1;border-radius:11px;"></div>
<svg class="a" style="left:1240px;top:698px;" width="12" height="12" viewBox="0 0 12 12"><path d="M6 1.8v5.6M3.8 5.3L6 7.5l2.2-2.2M2.2 8.2v1.9h7.6V8.2" fill="none" stroke="#4a5568" stroke-width="0.95"/></svg>
<div class="a t" style="left:1255.40px;top:700.02px;font-size:9.0px;color:#3a4352;transform:scaleX(0.9614);transform-origin:0 0;">Export CSV</div>
<div class="a" style="left:74.70px;top:726.50px;width:39.90px;height:24.20px;background:#fff;border:1px solid #b9bcc2;border-radius:3px;"></div>
<div class="a t" style="left:81.40px;top:734.02px;font-size:10.8px;color:#222;transform:scaleX(0.9659);transform-origin:0 0;">10</div>
<svg class="a" style="left:104px;top:736px;" width="9" height="8" viewBox="0 0 9 8"><path d="M2.2 2.6l2.3 2.3 2.3-2.3" fill="none" stroke="#444" stroke-width="1"/></svg>
<div class="a t" style="left:118.00px;top:734.02px;font-size:11.4px;color:#2d2d2d;transform:scaleX(1.1382);transform-origin:0 0;">entries per page</div>
<div class="a t" style="left:1112.90px;top:733.02px;font-size:11.4px;color:#2d2d2d;transform:scaleX(1.0725);transform-origin:0 0;">Search:</div>
<div class="a" style="left:1157.50px;top:725.40px;width:152.00px;height:25.40px;background:#fff;border:1px solid #b9bcc2;border-radius:3px;"></div>
<div class="a" style="left:74.80px;top:758.50px;width:1234.80px;height:241.50px;background:#fff;border:1px solid #e5e9f0;border-top-left-radius:3px;border-top-right-radius:3px;"></div>
<div class="a" style="left:74.80px;top:758.50px;width:1234.80px;height:27.70px;background:#f8fafc;border:1px solid #e5e9f0;border-bottom:1px solid #e3e8ef;"></div>
<div class="a t" style="left:82.80px;top:767.02px;font-size:10.6px;font-weight:700;color:#2f3a4b;transform:scaleX(1.0496);transform-origin:0 0;">Timestamp</div>
<svg class="a" style="left:168.8px;top:765px;" width="8.0" height="14" viewBox="0 0 8.0 14"><path d="M1.2 5.6L4 2.2l2.8 3.4z" fill="#d5dbe3"/><path d="M1.2 8.4L4 11.8l2.8-3.4z" fill="#4b5563"/></svg>
<div class="a t" style="left:193.60px;top:767.02px;font-size:10.6px;font-weight:700;color:#2f3a4b;transform:scaleX(1.0845);transform-origin:0 0;">Actor</div>
<svg class="a" style="left:249.7px;top:765px;" width="8.0" height="14" viewBox="0 0 8.0 14"><path d="M1.2 5.6L4 2.2l2.8 3.4z" fill="#d5dbe3"/><path d="M1.2 8.4L4 11.8l2.8-3.4z" fill="#d5dbe3"/></svg>
<div class="a t" style="left:274.60px;top:767.02px;font-size:10.6px;font-weight:700;color:#2f3a4b;transform:scaleX(1.1707);transform-origin:0 0;">Module</div>
<svg class="a" style="left:338.3px;top:765px;" width="8.0" height="14" viewBox="0 0 8.0 14"><path d="M1.2 5.6L4 2.2l2.8 3.4z" fill="#d5dbe3"/><path d="M1.2 8.4L4 11.8l2.8-3.4z" fill="#d5dbe3"/></svg>
<div class="a t" style="left:362.90px;top:767.02px;font-size:10.6px;font-weight:700;color:#2f3a4b;transform:scaleX(1.1554);transform-origin:0 0;">Entity</div>
<svg class="a" style="left:409.6px;top:765px;" width="8.0" height="14" viewBox="0 0 8.0 14"><path d="M1.2 5.6L4 2.2l2.8 3.4z" fill="#d5dbe3"/><path d="M1.2 8.4L4 11.8l2.8-3.4z" fill="#d5dbe3"/></svg>
<div class="a t" style="left:434.50px;top:767.02px;font-size:10.6px;font-weight:700;color:#2f3a4b;transform:scaleX(1.0165);transform-origin:0 0;">Action</div>
<svg class="a" style="left:471.3px;top:765px;" width="8.0" height="14" viewBox="0 0 8.0 14"><path d="M1.2 5.6L4 2.2l2.8 3.4z" fill="#d5dbe3"/><path d="M1.2 8.4L4 11.8l2.8-3.4z" fill="#d5dbe3"/></svg>
<div class="a t" style="left:495.70px;top:767.02px;font-size:10.6px;font-weight:700;color:#2f3a4b;transform:scaleX(0.9754);transform-origin:0 0;">Record</div>
<svg class="a" style="left:600.5px;top:765px;" width="8.0" height="14" viewBox="0 0 8.0 14"><path d="M1.2 5.6L4 2.2l2.8 3.4z" fill="#d5dbe3"/><path d="M1.2 8.4L4 11.8l2.8-3.4z" fill="#d5dbe3"/></svg>
<div class="a t" style="left:624.90px;top:767.02px;font-size:10.6px;font-weight:700;color:#2f3a4b;">Field</div>
<svg class="a" style="left:708.1px;top:765px;" width="8.0" height="14" viewBox="0 0 8.0 14"><path d="M1.2 5.6L4 2.2l2.8 3.4z" fill="#d5dbe3"/><path d="M1.2 8.4L4 11.8l2.8-3.4z" fill="#d5dbe3"/></svg>
<div class="a t" style="left:753.20px;top:767.02px;font-size:10.6px;font-weight:700;color:#2f3a4b;transform:scaleX(0.9477);transform-origin:0 0;">Before</div>
<div class="a t" style="left:800.30px;top:767.02px;font-size:10.6px;font-weight:700;color:#2f3a4b;transform:scaleX(0.9709);transform-origin:0 0;">After</div>
<svg class="a" style="left:828.9px;top:765px;" width="8.0" height="14" viewBox="0 0 8.0 14"><path d="M1.2 5.6L4 2.2l2.8 3.4z" fill="#d5dbe3"/><path d="M1.2 8.4L4 11.8l2.8-3.4z" fill="#d5dbe3"/></svg>
<div class="a t" style="left:853.40px;top:767.02px;font-size:10.6px;font-weight:700;color:#2f3a4b;transform:scaleX(1.0975);transform-origin:0 0;">Reason</div>
<svg class="a" style="left:1119.3px;top:765px;" width="8.0" height="14" viewBox="0 0 8.0 14"><path d="M1.2 5.6L4 2.2l2.8 3.4z" fill="#d5dbe3"/><path d="M1.2 8.4L4 11.8l2.8-3.4z" fill="#d5dbe3"/></svg>
<div class="a t" style="left:1143.80px;top:767.02px;font-size:10.6px;font-weight:700;color:#2f3a4b;transform:scaleX(1.0145);transform-origin:0 0;">Approval / Ticket</div>
<svg class="a" style="left:1234.0px;top:765px;" width="8.0" height="14" viewBox="0 0 8.0 14"><path d="M1.2 5.6L4 2.2l2.8 3.4z" fill="#d5dbe3"/><path d="M1.2 8.4L4 11.8l2.8-3.4z" fill="#d5dbe3"/></svg>
<div class="a t" style="left:1258.60px;top:767.02px;font-size:10.6px;font-weight:700;color:#2f3a4b;transform:scaleX(0.9161);transform-origin:0 0;">Risk</div>
<svg class="a" style="left:1291.5px;top:765px;" width="8.0" height="14" viewBox="0 0 8.0 14"><path d="M1.2 5.6L4 2.2l2.8 3.4z" fill="#d5dbe3"/><path d="M1.2 8.4L4 11.8l2.8-3.4z" fill="#d5dbe3"/></svg>
<div class="a" style="left:75.80px;top:830.80px;width:1232.80px;height:1.00px;background:#e8ecf2;"></div>
<div class="a" style="left:75.80px;top:865.90px;width:1232.80px;height:1.00px;background:#e8ecf2;"></div>
<div class="a" style="left:75.80px;top:912.60px;width:1232.80px;height:1.00px;background:#e8ecf2;"></div>
<div class="a t" style="left:82.80px;top:792.02px;font-size:10.0px;font-weight:700;color:#1e2533;transform:scaleX(1.1378);transform-origin:0 0;">2026-01-06</div>
<div class="a t" style="left:82.80px;top:805.02px;font-size:10.0px;font-weight:700;color:#1e2533;transform:scaleX(1.0292);transform-origin:0 0;">22:52:59</div>
<div class="a t" style="left:82.80px;top:819.02px;font-size:7.1px;font-family:'Liberation Mono', monospace;color:#8b95a7;transform:scaleX(1.0072);transform-origin:0 0;">BatchJob</div>
<div class="a t" style="left:193.70px;top:792.02px;font-size:10.0px;font-weight:700;color:#1e2533;transform:scaleX(1.0429);transform-origin:0 0;">Rina</div>
<div class="a t" style="left:193.70px;top:805.02px;font-size:10.0px;font-weight:700;color:#1e2533;transform:scaleX(1.0796);transform-origin:0 0;">Setiawati</div>
<div class="a t" style="left:193.70px;top:818.02px;font-size:8.0px;color:#8b95a7;transform:scaleX(1.0260);transform-origin:0 0;">HR Admin</div>
<div class="a t" style="left:274.60px;top:804.02px;font-size:10.8px;color:#1e2533;transform:scaleX(1.0205);transform-origin:0 0;">Security</div>
<div class="a t" style="left:362.90px;top:804.02px;font-size:10.8px;color:#1e2533;transform:scaleX(1.0442);transform-origin:0 0;">Appraisal</div>
<div class="a" style="left:434.60px;top:800.20px;width:40.70px;height:18.00px;background:#f8fafc;border:1px solid #e2e8f0;border-radius:9.0px;"></div>
<div class="a t" style="left:441.01px;top:806.02px;font-size:7.0px;color:#4a5568;">CREATE</div>
<div class="a t" style="left:495.70px;top:802.02px;font-size:7.8px;font-family:'Liberation Mono', monospace;color:#2f3a4b;transform:scaleX(1.0045);transform-origin:0 0;">SEC-APP-5102</div>
<div class="a t" style="left:495.70px;top:811.02px;font-size:8.0px;color:#8b95a7;transform:scaleX(1.0291);transform-origin:0 0;">Salary Band G10</div>
<div class="a t" style="left:624.90px;top:804.02px;font-size:10.8px;color:#1e2533;transform:scaleX(1.0953);transform-origin:0 0;">calibration_note</div>
<div class="a" style="left:1258.60px;top:800.00px;width:31.60px;height:18.60px;background:#fff1f3;border:1px solid #fdd5dc;border-radius:9.3px;"></div>
<div class="a t" style="left:1265.65px;top:806.02px;font-size:7.0px;color:#be123c;">HIGH</div>
<div class="a t" style="left:82.80px;top:839.02px;font-size:10.0px;font-weight:700;color:#1e2533;transform:scaleX(1.0170);transform-origin:0 0;">2026-01-06 11:17:59</div>
<div class="a t" style="left:82.80px;top:853.02px;font-size:7.1px;font-family:'Liberation Mono', monospace;color:#8b95a7;transform:scaleX(1.0179);transform-origin:0 0;">API</div>
<div class="a t" style="left:193.70px;top:839.02px;font-size:10.0px;font-weight:700;color:#1e2533;transform:scaleX(1.0234);transform-origin:0 0;">Sari Kurnia</div>
<div class="a t" style="left:193.70px;top:852.02px;font-size:8.0px;color:#8b95a7;transform:scaleX(1.0895);transform-origin:0 0;">Manager</div>
<div class="a t" style="left:274.60px;top:844.02px;font-size:10.8px;color:#1e2533;transform:scaleX(0.9556);transform-origin:0 0;">Org</div>
<div class="a t" style="left:362.90px;top:844.02px;font-size:10.8px;color:#1e2533;transform:scaleX(1.0122);transform-origin:0 0;">SalaryBand</div>
<div class="a" style="left:434.60px;top:840.50px;width:41.10px;height:18.50px;background:#f8fafc;border:1px solid #e2e8f0;border-radius:9.2px;"></div>
<div class="a t" style="left:441.21px;top:846.02px;font-size:7.0px;color:#4a5568;">UPDATE</div>
<div class="a t" style="left:495.70px;top:842.02px;font-size:7.8px;font-family:'Liberation Mono', monospace;color:#2f3a4b;transform:scaleX(1.0045);transform-origin:0 0;">ORG-SAL-6515</div>
<div class="a t" style="left:495.70px;top:851.02px;font-size:8.0px;color:#8b95a7;transform:scaleX(1.0291);transform-origin:0 0;">Salary Band G10</div>
<div class="a t" style="left:624.90px;top:844.02px;font-size:10.8px;color:#1e2533;transform:scaleX(1.1067);transform-origin:0 0;">salary_band_mid</div>
<div class="a" style="left:1258.60px;top:840.30px;width:31.60px;height:18.60px;background:#fff1f3;border:1px solid #fdd5dc;border-radius:9.3px;"></div>
<div class="a t" style="left:1265.65px;top:846.02px;font-size:7.0px;color:#be123c;">HIGH</div>
<div class="a t" style="left:82.80px;top:873.02px;font-size:10.0px;font-weight:700;color:#1e2533;transform:scaleX(1.1378);transform-origin:0 0;">2026-01-06</div>
<div class="a t" style="left:82.80px;top:886.02px;font-size:10.0px;font-weight:700;color:#1e2533;transform:scaleX(1.0492);transform-origin:0 0;">07:24:59</div>
<div class="a t" style="left:82.80px;top:900.02px;font-size:7.1px;font-family:'Liberation Mono', monospace;color:#8b95a7;transform:scaleX(1.0080);transform-origin:0 0;">Integration</div>
<div class="a t" style="left:193.70px;top:873.02px;font-size:10.0px;font-weight:700;color:#1e2533;transform:scaleX(1.0200);transform-origin:0 0;">Agus</div>
<div class="a t" style="left:193.70px;top:886.02px;font-size:10.0px;font-weight:700;color:#1e2533;transform:scaleX(1.0667);transform-origin:0 0;">Widodo</div>
<div class="a t" style="left:193.70px;top:899.02px;font-size:8.0px;color:#8b95a7;transform:scaleX(1.0466);transform-origin:0 0;">Executive</div>
<div class="a t" style="left:274.60px;top:885.02px;font-size:10.8px;color:#1e2533;transform:scaleX(1.0543);transform-origin:0 0;">Compensation</div>
<div class="a t" style="left:362.90px;top:885.02px;font-size:10.8px;color:#1e2533;transform:scaleX(0.9727);transform-origin:0 0;">Role</div>
<div class="a" style="left:434.60px;top:881.50px;width:35.40px;height:17.80px;background:#f8fafc;border:1px solid #e2e8f0;border-radius:8.9px;"></div>
<div class="a t" style="left:441.41px;top:887.02px;font-size:7.0px;color:#4a5568;">LOGIN</div>
<div class="a t" style="left:495.70px;top:882.02px;font-size:7.8px;font-family:'Liberation Mono', monospace;color:#2f3a4b;transform:scaleX(1.0045);transform-origin:0 0;">COM-ROL-3553</div>
<div class="a t" style="left:495.70px;top:891.02px;font-size:8.0px;color:#8b95a7;transform:scaleX(1.0639);transform-origin:0 0;">Role: Branch Operations Lead</div>
<div class="a t" style="left:624.90px;top:885.02px;font-size:10.8px;color:#1e2533;transform:scaleX(1.0107);transform-origin:0 0;">session</div>
<div class="a" style="left:1258.60px;top:881.30px;width:30.50px;height:18.60px;background:#f8fafc;border:1px solid #e2e8f0;border-radius:9.3px;"></div>
<div class="a t" style="left:1265.88px;top:887.02px;font-size:7.0px;color:#4a5568;">LOW</div>
<div class="a t" style="left:82.80px;top:921.02px;font-size:10.0px;font-weight:700;color:#1e2533;transform:scaleX(1.1378);transform-origin:0 0;">2026-01-06</div>
<div class="a t" style="left:82.80px;top:933.02px;font-size:10.0px;font-weight:700;color:#1e2533;transform:scaleX(1.0118);transform-origin:0 0;">07:21:59</div>
<div class="a t" style="left:82.80px;top:946.02px;font-size:7.1px;font-family:'Liberation Mono', monospace;color:#8b95a7;transform:scaleX(1.0072);transform-origin:0 0;">BatchJob</div>
<div class="a t" style="left:193.70px;top:921.02px;font-size:10.0px;font-weight:700;color:#1e2533;transform:scaleX(1.0661);transform-origin:0 0;">Dimas</div>
<div class="a t" style="left:193.70px;top:933.02px;font-size:10.0px;font-weight:700;color:#1e2533;transform:scaleX(1.0538);transform-origin:0 0;">Prabowo</div>
<div class="a t" style="left:193.70px;top:945.02px;font-size:8.0px;color:#8b95a7;transform:scaleX(0.8458);transform-origin:0 0;">HRBP</div>
<div class="a t" style="left:274.60px;top:931.02px;font-size:10.8px;color:#1e2533;transform:scaleX(0.9303);transform-origin:0 0;">Performance</div>
<div class="a t" style="left:362.90px;top:931.02px;font-size:10.8px;color:#1e2533;transform:scaleX(1.0442);transform-origin:0 0;">Appraisal</div>
<div class="a" style="left:434.60px;top:927.80px;width:37.80px;height:18.50px;background:#fff1f3;border:1px solid #fdd5dc;border-radius:9.2px;"></div>
<div class="a t" style="left:439.88px;top:934.02px;font-size:7.0px;color:#be123c;">DELETE</div>
<div class="a t" style="left:495.70px;top:929.02px;font-size:7.8px;font-family:'Liberation Mono', monospace;color:#2f3a4b;transform:scaleX(1.0045);transform-origin:0 0;">PER-APP-9111</div>
<div class="a t" style="left:495.70px;top:939.02px;font-size:8.0px;color:#8b95a7;transform:scaleX(1.0815);transform-origin:0 0;">Employee Profile Update</div>
<div class="a t" style="left:624.90px;top:931.02px;font-size:10.8px;color:#1e2533;transform:scaleX(1.0632);transform-origin:0 0;">permission_set</div>
<div class="a" style="left:1258.60px;top:927.90px;width:43.80px;height:17.50px;background:#fffbeb;border:1px solid #fde68a;border-radius:8.8px;"></div>
<div class="a t" style="left:1266.31px;top:933.02px;font-size:7.0px;color:#b45309;">MEDIUM</div>
<svg class="a" style="left:787px;top:769px;" width="13" height="8" viewBox="0 0 13 8"><path d="M1.20 4H9.50" stroke="#7a8494" stroke-width="1.1"/><path d="M7.90 2.20L10.10 4L7.90 5.80z" fill="#7a8494"/></svg>
<div class="a t" style="left:732.80px;top:806.02px;font-size:8.0px;color:#8b95a7;transform:scaleX(0.9440);transform-origin:0 0;">3</div>
<svg class="a" style="left:738px;top:806px;" width="12" height="8" viewBox="0 0 12 8"><path d="M1.60 4H8.40" stroke="#8b95a7" stroke-width="0.8"/><path d="M7.20 2.60L9.00 4L7.20 5.40z" fill="#8b95a7"/></svg>
<div class="a t" style="left:749.60px;top:806.02px;font-size:8.0px;font-weight:700;color:#1e2533;transform:scaleX(1.0114);transform-origin:0 0;">5</div>
<div class="a t" style="left:732.80px;top:846.02px;font-size:8.0px;color:#8b95a7;transform:scaleX(1.0086);transform-origin:0 0;">10882882</div>
<svg class="a" style="left:770px;top:846px;" width="11" height="8" viewBox="0 0 11 8"><path d="M1.30 4H8.20" stroke="#6b7588" stroke-width="0.8"/><path d="M7.00 2.60L8.80 4L7.00 5.40z" fill="#6b7588"/></svg>
<div class="a t" style="left:781.00px;top:846.02px;font-size:8.0px;font-weight:700;color:#1e2533;transform:scaleX(0.9974);transform-origin:0 0;">10823778</div>
<svg class="a" style="left:731px;top:887px;" width="12" height="8" viewBox="0 0 12 8"><path d="M1.80 4H8.40" stroke="#6b7588" stroke-width="0.8"/><path d="M7.20 2.60L9.00 4L7.20 5.40z" fill="#6b7588"/></svg>
<div class="a t" style="left:742.90px;top:887.02px;font-size:8.0px;font-weight:700;color:#1e2533;transform:scaleX(1.0356);transform-origin:0 0;">login_success</div>
<div class="a t" style="left:732.50px;top:926.02px;font-size:8.0px;color:#8b95a7;transform:scaleX(0.9317);transform-origin:0 0;">READ_ONLY</div>
<svg class="a" style="left:778px;top:926px;" width="12" height="8" viewBox="0 0 12 8"><path d="M1.50 4H8.40" stroke="#9aa3b3" stroke-width="0.8"/><path d="M7.20 2.60L9.00 4L7.20 5.40z" fill="#9aa3b3"/></svg>
<div class="a t" style="left:732.50px;top:940.02px;font-size:8.0px;font-weight:700;color:#1e2533;transform:scaleX(0.9680);transform-origin:0 0;">HR_MANAGER</div>
<div class="a t" style="left:853.40px;top:805.02px;font-size:8.4px;color:#2f3a4b;transform:scaleX(1.0744);transform-origin:0 0;">Access granted for operational continuity and segregation of duties</div>
<div class="a t" style="left:853.40px;top:845.02px;font-size:8.4px;color:#2f3a4b;transform:scaleX(1.0744);transform-origin:0 0;">Access granted for operational continuity and segregation of duties</div>
<div class="a t" style="left:853.40px;top:878.02px;font-size:8.4px;color:#2f3a4b;transform:scaleX(1.0630);transform-origin:0 0;">Exception: Correction based on supporting evidence and manager</div>
<div class="a t" style="left:853.40px;top:893.02px;font-size:8.4px;color:#2f3a4b;transform:scaleX(1.1068);transform-origin:0 0;">input</div>
<div class="a" style="left:879.10px;top:889.50px;width:47.70px;height:15.10px;background:#fffbeb;border:1px solid #fde68a;border-radius:7.6px;"></div>
<div class="a t" style="left:885.70px;top:894.02px;font-size:7.8px;color:#b45309;transform:scaleX(1.0337);transform-origin:0 0;">exception</div>
<div class="a t" style="left:853.40px;top:931.02px;font-size:8.4px;color:#2f3a4b;transform:scaleX(1.0756);transform-origin:0 0;">Calibration alignment to maintain fairness across units</div>
<div class="a t" style="left:1143.80px;top:807.02px;font-size:7.0px;font-family:'Liberation Mono', monospace;color:#2f3a4b;transform:scaleX(1.0189);transform-origin:0 0;">APR-656202</div>
<div class="a t" style="left:1143.80px;top:847.02px;font-size:7.0px;font-family:'Liberation Mono', monospace;color:#8b95a7;">-</div>
<div class="a t" style="left:1143.80px;top:888.02px;font-size:7.0px;font-family:'Liberation Mono', monospace;color:#2f3a4b;transform:scaleX(1.0189);transform-origin:0 0;">APR-970285</div>
<div class="a t" style="left:1143.80px;top:935.02px;font-size:7.0px;font-family:'Liberation Mono', monospace;color:#2f3a4b;transform:scaleX(1.0189);transform-origin:0 0;">APR-223847</div>
</body></html>
